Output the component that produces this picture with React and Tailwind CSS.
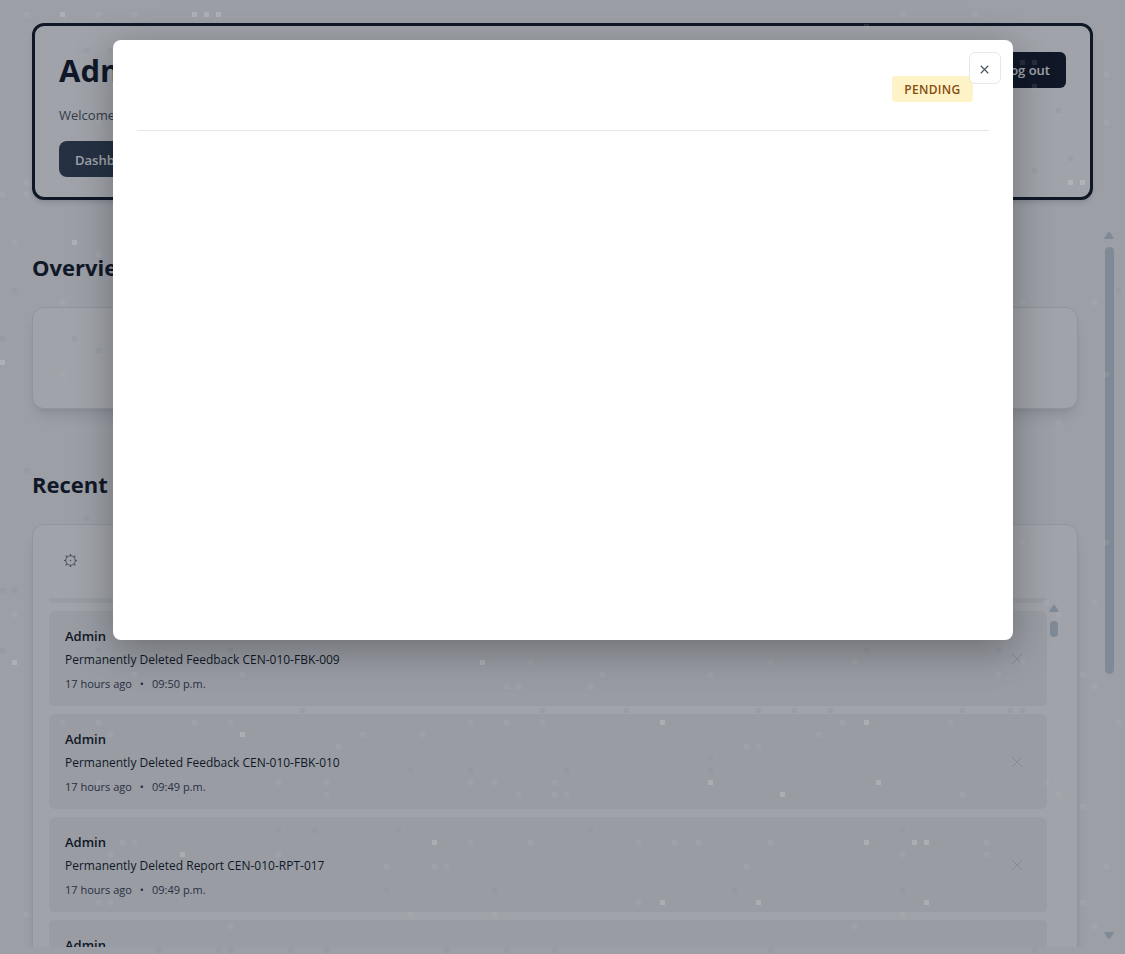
import React from "react";

const CELL = 12;

// [row, faint columns, bright columns, dark columns]
const SPARKLES = [
  [1, [2, 8, 11, 75, 81], [5, 16, 17, 18], []],
  [2, [72], [], []],
  [4, [], [], [7, 9]],
  [5, [85, 86], [], []],
  [6, [92], [], []],
  [7, [86], [], []],
  [9, [], [], [88]],
  [10, [8, 92], [], []],
  [13, [], [], [89]],
  [14, [], [], [86]],
  [15, [2], [89, 90], []],
  [16, [0, 2], [], []],
  [20, [1], [6], []],
  [21, [8], [], []],
  [24, [], [], [1, 93]],
  [25, [5, 85, 91], [], []],
  [28, [], [], [0, 6]],
  [29, [], [], [8]],
  [30, [], [0], []],
  [31, [5, 92], [], []],
  [35, [88], [], []],
  [39, [], [], [2]],
  [43, [], [], [7]],
  [45, [85, 92], [], []],
  [49, [], [], [0, 1]],
  [50, [87, 91], [], []],
  [51, [1, 88], [], []],
  [54, [], [], [0, 8, 19, 72, 83]],
  [55, [44, 64, 71, 85], [1, 40], []],
  [56, [11, 20, 50, 59, 83, 90], [], []],
  [57, [42, 43, 49, 91], [], []],
  [59, [], [], [25, 45, 52, 63, 66, 69, 80, 84, 85]],
  [60, [5, 8, 16, 19, 39, 42, 45, 70, 79, 93], [55, 72], []],
  [61, [9, 30, 35, 68], [20], []],
  [62, [28, 62, 63], [], []],
  [63, [], [], [59]],
  [64, [], [], [34, 39, 47, 59]],
  [65, [8, 23, 27, 39, 41, 46, 87], [59, 73], []],
  [66, [27, 43, 46, 47, 80, 88], [65], []],
  [67, [90], [], []],
  [69, [], [], [23, 26, 33, 49, 75]],
  [70, [10, 11, 39, 44, 53, 56, 58, 64, 82], [36, 72, 76, 77], []],
  [71, [9, 23, 75, 82], [15], []],
  [72, [32, 36, 37, 62, 92], [], []],
  [74, [], [], [32, 41, 61, 75]],
  [75, [8, 9, 53, 90], [55, 63, 77], []],
  [76, [2, 34, 41, 75], [], []],
  [77, [19, 71, 91], [], []],
  [79, [], [], [13, 18, 19, 24, 27, 37, 42, 46, 64, 86]],
];

const ACTIVITY = [
  { id: 1, user: "Admin", text: "Permanently Deleted Feedback CEN-010-FBK-009", ago: "17 hours ago", time: "09:50 p.m." },
  { id: 2, user: "Admin", text: "Permanently Deleted Feedback CEN-010-FBK-010", ago: "17 hours ago", time: "09:49 p.m." },
  { id: 3, user: "Admin", text: "Permanently Deleted Report CEN-010-RPT-017", ago: "17 hours ago", time: "09:49 p.m." },
  { id: 4, user: "Admin" },
];

function Dots({ columns, row, fill, opacity }) {
  return columns.map((c) => (
    <rect key={c} x={c * CELL} y={row * CELL} width="5" height="5" fill={fill} opacity={opacity} />
  ));
}

function Sparkles() {
  return (
    <svg aria-hidden="true" className="pointer-events-none absolute inset-0 h-full w-full">
      {SPARKLES.map(([row, faint, bright, dark]) => (
        <g key={row}>
          <Dots columns={faint} row={row} fill="#c8ccd0" opacity="0.12" />
          <Dots columns={bright} row={row} fill="#d0d3d6" opacity="0.34" />
          <Dots columns={dark} row={row} fill="#6f7480" opacity="0.1" />
        </g>
      ))}
    </svg>
  );
}

function Arrow({ down = false }) {
  return (
    <svg viewBox="0 0 10 7" className="h-[7px] w-[10px] shrink-0 fill-slate-300" aria-hidden="true">
      <path d={down ? "M.5 1.5 Q-.2 0 1.4 0 H8.6 Q10.2 0 9.5 1.5 L6.6 5.8 Q5 8 3.4 5.8Z" : "M.5 5.5 Q-.2 7 1.4 7 H8.6 Q10.2 7 9.5 5.5 L6.6 1.2 Q5 -1 3.4 1.2Z"} />
    </svg>
  );
}

function Cross({ className }) {
  return (
    <svg viewBox="0 0 12 12" className={className} fill="none" stroke="currentColor" aria-hidden="true">
      <path d="M1 1 11 11M11 1 1 11" />
    </svg>
  );
}

function Gear() {
  return (
    <svg viewBox="0 0 12 12" className="size-[13px] text-gray-500" fill="none" stroke="currentColor" aria-hidden="true">
      <circle cx="6" cy="6" r="4.4" strokeWidth=".9" />
      <circle cx="6" cy="6" r=".7" fill="currentColor" stroke="none" />
      <path
        strokeWidth="1.1"
        d="M6 0V1.6M6 10.4V12M0 6H1.6M10.4 6H12M1.6 1.6 2.9 2.9M9.1 9.1l1.3 1.3M1.6 10.4 2.9 9.1M9.1 2.9l1.3-1.3"
      />
    </svg>
  );
}

function ActivityItem({ item }) {
  return (
    <li className="flex h-[95px] shrink-0 items-start justify-between rounded-md bg-gray-100 pt-[14px] pr-6 pl-4">
      <div className="flex flex-col gap-[2px]">
        <p className="text-[13px] leading-[22px] font-semibold text-gray-900">{item.user}</p>
        {item.text && (
          <>
            <p className="text-xs leading-[22px] text-gray-900">{item.text}</p>
            <p className="flex gap-2 text-[11px] leading-[22px] text-gray-700">
              <span>{item.ago}</span>
              <span>•</span>
              <span>{item.time}</span>
            </p>
          </>
        )}
      </div>
      <button type="button" aria-label="Remove entry" className="mt-7 text-gray-300">
        <Cross className="size-3" />
      </button>
    </li>
  );
}

function Modal() {
  return (
    <div className="absolute inset-0 flex items-start justify-center bg-[#111827]/40 pt-10">
      <Sparkles />
      <div
        role="dialog"
        aria-modal="true"
        aria-label="Details"
        className="relative h-[600px] w-full max-w-[900px] rounded-lg bg-white p-6 shadow-[0_10px_40px_rgba(0,0,0,0.3)]"
      >
        <div className="flex justify-end border-b border-gray-200 pt-3 pr-4 pb-7">
          <span className="rounded bg-[#fef3c7] px-3 pt-[2px] text-xs leading-6 font-semibold tracking-wide text-[#854d0e]">
            PENDING
          </span>
        </div>
        <button
          type="button"
          aria-label="Close"
          className="absolute top-3 right-3 flex size-8 items-center justify-center rounded-md border border-gray-200 bg-white pt-[2px] text-gray-600"
        >
          <Cross className="size-[9px] stroke-[1.6]" />
        </button>
      </div>
    </div>
  );
}

export default function App() {
  return (
    <div className="relative flex h-screen flex-col overflow-hidden bg-[#f8f9fb] font-['Open_Sans','Noto_Sans',sans-serif] text-gray-900">
      <header className="mx-8 mt-[23px] shrink-0 rounded-xl border-3 border-gray-900 bg-white px-6 pt-6 pb-5 shadow-md">
        <div className="flex items-center justify-between">
          <h1 className="text-[31px] leading-10 font-bold">Admin Dashboard</h1>
          <button type="button" className="h-9 rounded-md bg-gray-900 px-4 pt-[2px] text-[13px] font-semibold text-white">
            Log out
          </button>
        </div>
        <p className="mt-[13px] text-[13px] leading-6 text-gray-600">Welcome back</p>
        <nav className="mt-[14px] flex">
          <a href="#dashboard" className="rounded-lg bg-[#334155] px-4 pt-[2px] text-[13px] leading-[34px] font-semibold text-white">
            Dashboard
          </a>
        </nav>
      </header>

      <div className="mt-8 flex min-h-0 flex-1 pr-[3px]">
        <main className="min-w-0 flex-1 overflow-hidden pr-[18px] pl-8">
          <h2 className="mt-[19px] text-[22px] leading-8 font-bold">Overview</h2>
          <section className="mt-6 h-[102px] rounded-xl border border-gray-200 bg-white shadow-lg" />

          <h2 className="mt-[59px] text-[22px] leading-8 font-bold">Recent</h2>
          <section className="mt-6 rounded-xl border border-gray-200 bg-white p-4 shadow-lg">
            <div className="flex h-[57px] items-start px-[15px] pt-[13px]">
              <button type="button" aria-label="Settings">
                <Gear />
              </button>
            </div>
            <div className="flex">
              <ul className="flex min-w-0 flex-1 flex-col gap-2">
                <li aria-hidden="true" className="h-[5px] rounded-b-md bg-gray-100" />
                {ACTIVITY.map((item) => (
                  <ActivityItem key={item.id} item={item} />
                ))}
              </ul>
              <div className="flex w-[14px] flex-col items-center pt-[7px]">
                <Arrow />
                <div className="mt-[9px] h-4 w-2 rounded-full bg-slate-300" />
              </div>
            </div>
          </section>
        </main>
        <div className="flex w-[26px] flex-col items-center justify-between pb-2">
          <div className="flex min-h-0 flex-1 flex-col items-center">
            <Arrow />
            <div className="mt-2 h-[61%] w-[9px] rounded-full bg-slate-300" />
          </div>
          <Arrow down />
        </div>
      </div>
      <footer className="h-[7px] shrink-0" />
      <Modal />
    </div>
  );
}
